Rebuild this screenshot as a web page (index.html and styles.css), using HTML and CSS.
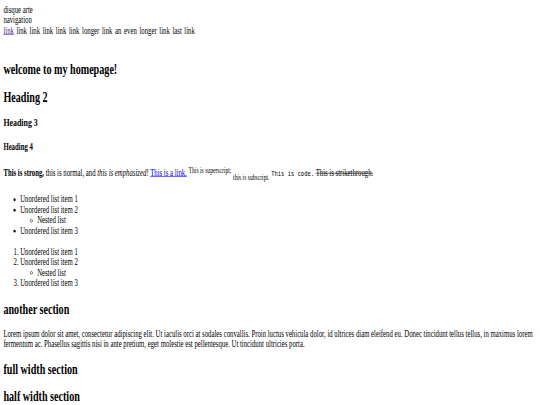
FILE: index.html
```html
<!DOCTYPE html>
<html lang="en">
<head>
<meta charset="utf-8">
<title>disque arte</title>
<link rel="stylesheet" href="styles.css">
</head>
<body>
<div class="stage">
  <div class="page">
    <header class="site-header">
      <div>disque arte</div>
      <nav>
        <div>navigation</div>
        <div class="nav-links"><a class="visited" href="#home">link</a> <span>link</span> <span>link</span> <span>link</span> <span>link</span> <span>link</span> <span>longer link</span> <span>an even longer link</span> <span>last link</span></div>
      </nav>
    </header>
    <main>
      <section>
        <h1>welcome to my homepage!</h1>
        <h2>Heading 2</h2>
        <h3>Heading 3</h3>
        <h4 class="last-heading">Heading 4</h4>
        <p class="intro-text"><strong>This is strong,</strong> this is normal, and <em>this is emphasized!</em> <a class="link" href="#link">This is a link.</a> <sup>This is superscript;</sup> <sub>this is subscript.</sub> <code>This is code.</code> <s>This is strikethrough.</s></p>
        <ul class="demo-list">
          <li>Unordered list item 1</li>
          <li>Unordered list item 2
            <ul><li>Nested list</li></ul>
          </li>
          <li>Unordered list item 3</li>
        </ul>
        <ol class="demo-list demo-list-last">
          <li>Unordered list item 1</li>
          <li>Unordered list item 2
            <ul><li>Nested list</li></ul>
          </li>
          <li>Unordered list item 3</li>
        </ol>
      </section>
      <section>
        <h1>another section</h1>
        <p class="lorem">Lorem ipsum dolor sit amet, consectetur adipiscing elit. Ut iaculis orci at sodales convallis. Proin luctus vehicula dolor, id ultrices diam eleifend eu. Donec tincidunt tellus tellus, in maximus lorem fermentum ac. Phasellus sagittis nisi in ante pretium, eget molestie est pellentesque. Ut tincidunt ultricies porta.</p>
      </section>
      <section>
        <h1>full width section</h1>
      </section>
      <section>
        <h1>half width section</h1>
      </section>
    </main>
  </div>
</div>
</body>
</html>
```
FILE: styles.css
```css
html, body {
  margin: 0;
  padding: 0;
  background: #ffffff;
  overflow: hidden;
}

body {
  width: 540px;
  height: 405px;
}

.stage {
  width: 1280px;
  height: 698px;
  transform: scale(0.421875, 0.58);
  transform-origin: 0 0;
  font-family: "Liberation Serif", "Times New Roman", serif;
  font-size: 16px;
  color: #000000;
}

.page {
  padding: 8px;
}

.site-header {
  padding-bottom: 25.5px;
}

.nav-links {
  word-spacing: 2.2px;
}

.visited,
.visited:link,
.visited:visited {
  color: #551a8b;
  text-decoration: underline;
}

.link,
.link:link,
.link:visited {
  color: #0000ee;
  text-decoration: underline;
}

section h1 {
  font-size: 1.5em;
  margin: 0.83em 0;
}

.last-heading {
  margin-bottom: 25px;
}

.intro-text {
  margin-bottom: 20px;
}

.demo-list {
  margin: 18px 0;
}

.demo-list ul {
  margin: 0;
}

.demo-list-last {
  margin-bottom: 23px;
}

.lorem {
  margin-bottom: 21px;
}

sup {
  vertical-align: 0.3em;
}

sub {
  vertical-align: -0.6em;
}

code {
  font-family: "DejaVu Sans Mono", monospace;
  font-size: 13px;
}
```
